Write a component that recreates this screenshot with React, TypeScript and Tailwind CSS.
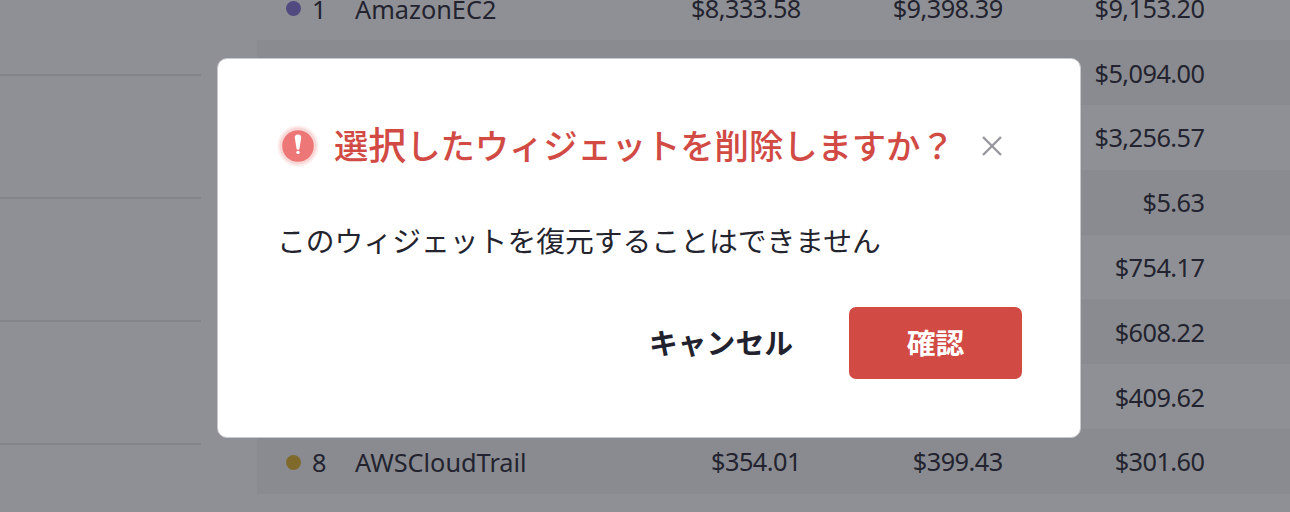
const FONT = "font-['Noto_Sans','Noto_Sans_CJK_JP',sans-serif]";

type Row = { rank?: number; name?: string; dot?: string; costs: string[] };

const rows: Row[] = [
  { rank: 1, name: "AmazonEC2", dot: "bg-[#514a81]", costs: ["$8,333.58", "$9,398.39", "$9,153.20"] },
  { costs: ["", "", "$5,094.00"] },
  { costs: ["", "", "$3,256.57"] },
  { costs: ["", "", "$5.63"] },
  { costs: ["", "", "$754.17"] },
  { costs: ["", "", "$608.22"] },
  { costs: ["", "", "$409.62"] },
  { rank: 8, name: "AWSCloudTrail", dot: "bg-[#806a2b]", costs: ["$354.01", "$399.43", "$301.60"] },
];

function Backdrop() {
  return (
    <div className="flex h-[512px] w-[1290px] overflow-hidden">
      <div className="-mt-[47px] w-[201px] shrink-0">
        {[0, 1, 2, 3].map((i) => (
          <div key={i} className="h-[123px] border-b-2 border-[#83848a]" />
        ))}
      </div>
      <div className="-mt-[24.6px] ml-[56px] grow text-[25.3px] leading-[62px] text-[#22232f]">
        {rows.map((row, i) => (
          <div key={i} className={`flex h-[64.8px] items-center ${i % 2 ? "bg-[#8a8b90]" : ""}`}>
            <div className="flex w-[342px] shrink-0 items-center pl-[29px] pt-[2px]">
              {row.name && (
                <>
                  <span className={`size-[15px] rounded-full ${row.dot}`} />
                  <span className="ml-[11px] w-[43px]">{row.rank}</span>
                  <span>{row.name}</span>
                </>
              )}
            </div>
            {row.costs.map((cost, j) => (
              <div key={j} className="w-[201.8px] shrink-0 text-right tracking-[-0.55px]">{cost}</div>
            ))}
          </div>
        ))}
      </div>
    </div>
  );
}

export default function App() {
  return (
    <div className={`relative h-[512px] w-[1290px] overflow-hidden bg-[#8f9095] ${FONT}`}>
      <Backdrop />
      <div
        role="dialog"
        className="absolute left-[217px] top-[58px] flex h-[380px] w-[864px] flex-col rounded-[10px] border border-[#c9c9cc] bg-white px-[58px] pt-[59px]"
      >
        <div className="flex h-[54px] items-center">
          <svg width="42" height="42" viewBox="0 0 42 42" className="ml-[1px] mt-[1px]">
            <circle cx="21" cy="21" r="20.5" fill="#fdeeee" />
            <circle cx="21" cy="21" r="18.5" fill="#f9d7d6" />
            <circle cx="21" cy="21" r="15.8" fill="#ec7776" />
            <path d="M21 9.5c-2.4 0-3.4 1.3-3.2 3.3l1.7 10.6c.3 1.7 2.7 1.7 3 0l1.7-10.6c.2-2-.8-3.3-3.2-3.3z" fill="#fff" />
            <circle cx="21" cy="27.4" r="1.7" fill="#fff" />
          </svg>
          <h1 className="ml-[15px] w-[630px] whitespace-nowrap text-[34.4px] font-medium leading-[54px] tracking-[-0.12px] text-[#d14a44]">
            選<span className="text-[38px]">択</span>したウィジェットを削除しますか？
          </h1>
          <button aria-label="閉じる" className="ml-[17px] mt-[1px]">
            <svg width="22" height="22" viewBox="0 0 22 22" fill="none" stroke="#97989e" strokeWidth="2.4">
              <path d="M2 2l18 18M20 2L2 20" />
            </svg>
          </button>
        </div>
        <p className="ml-[1px] mt-[47px] h-[44px] whitespace-nowrap text-[28.8px] leading-[44px] text-[#23242e]">
          このウィジェットを復元することはできません
        </p>
        <div className="mt-[44px] flex h-[72px] justify-end text-[28.8px] font-bold">
          <button className="mr-[56px] text-[#22222e]">キャンセル</button>
          <button className="w-[173px] rounded-[7px] bg-[#d14a44] text-white">確認</button>
        </div>
      </div>
    </div>
  );
}
